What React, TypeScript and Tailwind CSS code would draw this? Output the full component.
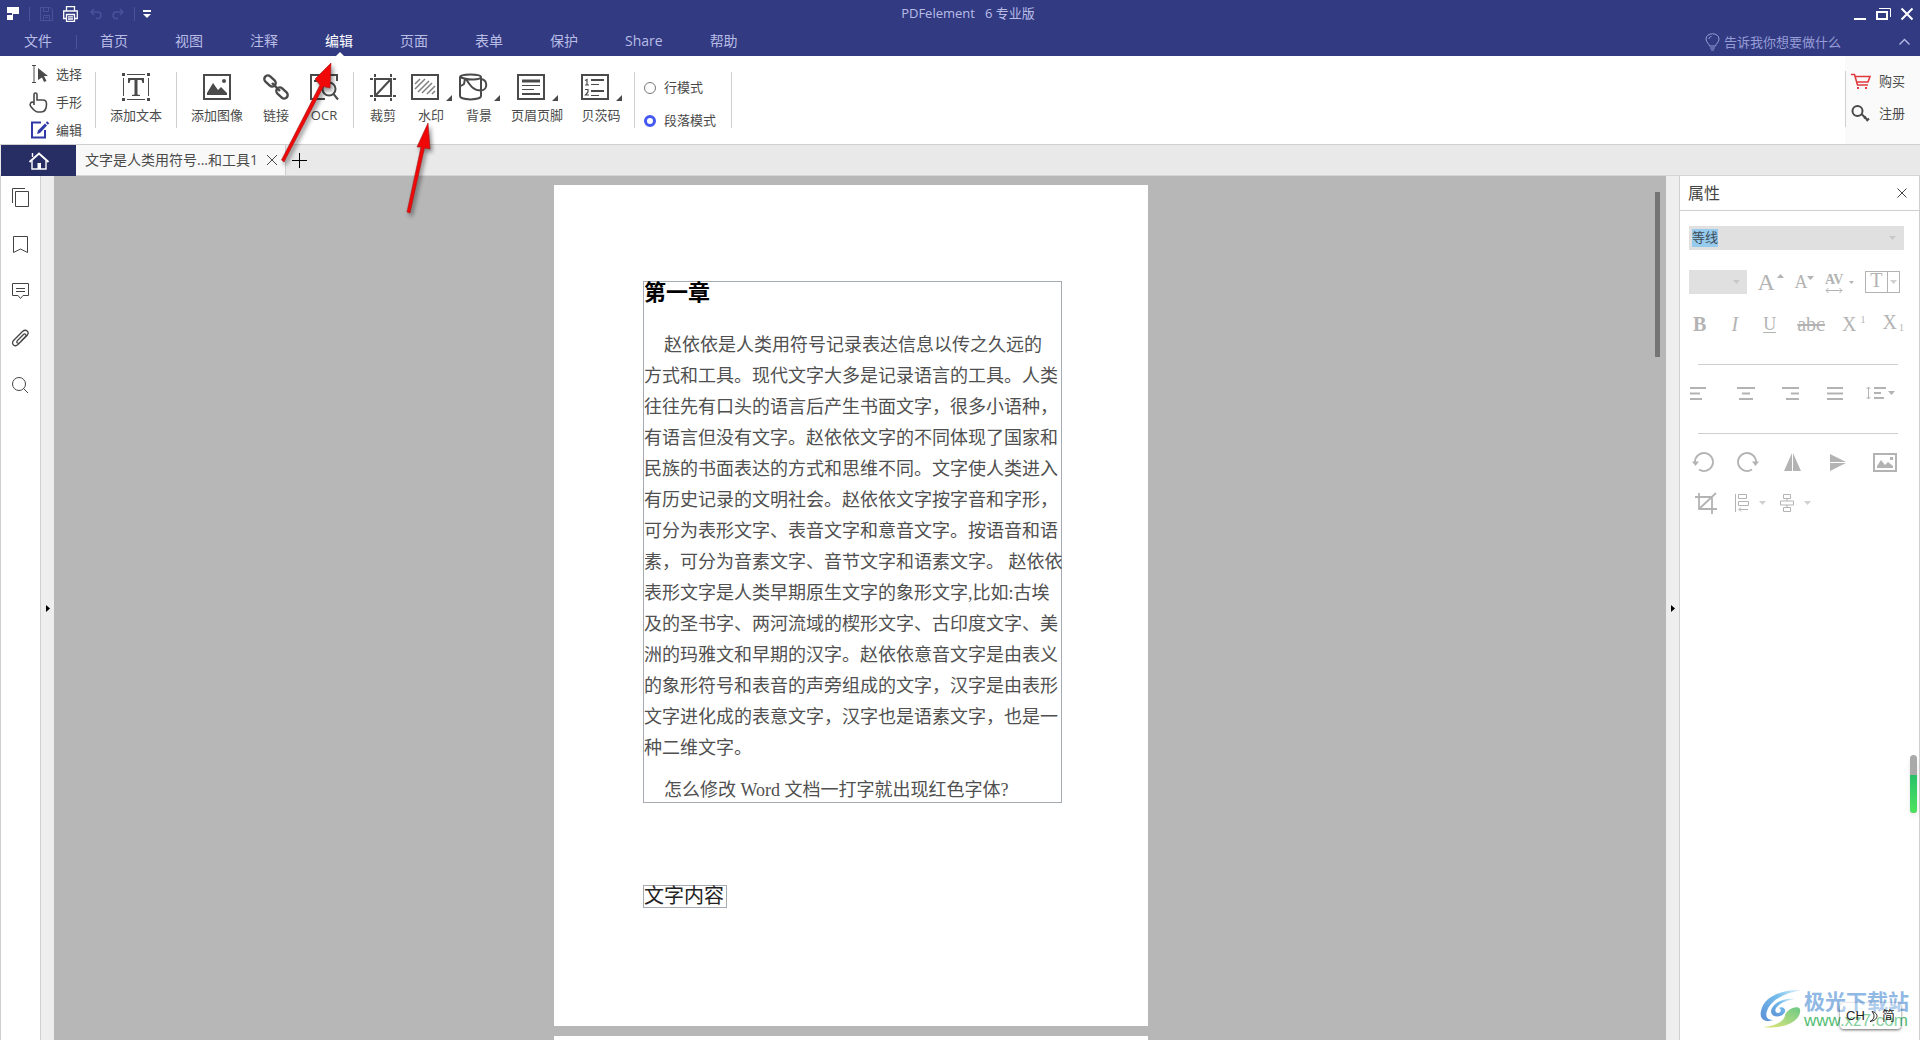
/**
 * PDF editor window
 *
 * - Title bar with quick actions and the main menu
 * - Ribbon for the edit tab
 * - Document tabs
 * - Left tool bar, page canvas and the properties panel
 */
import type { ReactNode } from "react";
import { useState } from "react";

const MENU = ["首页", "视图", "注释", "编辑", "页面", "表单", "保护", "Share", "帮助"];

const LINES = [
  "方式和工具。现代文字大多是记录语言的工具。人类",
  "往往先有口头的语言后产生书面文字，很多小语种，",
  "有语言但没有文字。赵依依文字的不同体现了国家和",
  "民族的书面表达的方式和思维不同。文字使人类进入",
  "有历史记录的文明社会。赵依依文字按字音和字形，",
  "可分为表形文字、表音文字和意音文字。按语音和语",
  "素，可分为音素文字、音节文字和语素文字。 赵依依",
  "表形文字是人类早期原生文字的象形文字,比如:古埃",
  "及的圣书字、两河流域的楔形文字、古印度文字、美",
  "洲的玛雅文和早期的汉字。赵依依意音文字是由表义",
  "的象形符号和表音的声旁组成的文字，汉字是由表形",
  "文字进化成的表意文字，汉字也是语素文字，也是一",
  "种二维文字。",
];

/* Small stroke icon, drawn 1:1 in pixels */
function Icon({ w, h, sw = 1, children }: { w: number; h: number; sw?: number; children: ReactNode }) {
  return (
    <svg
      width={w}
      height={h}
      viewBox={`0 0 ${w} ${h}`}
      fill="none"
      stroke="currentColor"
      strokeWidth={sw}
      className="shrink-0 overflow-visible"
      aria-hidden="true"
    >
      {children}
    </svg>
  );
}

function Caret() {
  return (
    <Icon w={7} h={4}>
      <path d="M0 0H7L3.5 4Z" fill="currentColor" stroke="none" />
    </Icon>
  );
}

function Divider() {
  return <div className="h-14 w-px shrink-0 bg-[#cfcfcf]" />;
}

/* ---------- Title bar and menu ---------- */

function TitleBar() {
  return (
    <div className="grid h-[27px] grid-cols-[1fr_auto_1fr] items-center text-white">
      <div className="flex items-center pl-[7px]">
        <Icon w={12} h={14}>
          <path d="M0 0H12V7H6V13H0V8H5V6H0Z" fill="currentColor" stroke="none" />
        </Icon>
        <span className="ml-2.5 h-3.5 w-px bg-[#4a529a]" />
        <button aria-label="保存" className="ml-2.5 text-[#4a529a]">
          <Icon w={13} h={14}>
            <path d="M.5 .5H10L12.5 3V13.5H.5ZM3.5 .5V4.5H8.5V.5M3.5 13V8.5H9.5V13M5 10.5H8" />
          </Icon>
        </button>
        <button aria-label="打印" className="ml-2.5">
          <Icon w={15} h={16} sw={1.3}>
            <path d="M3.5 5V.7H11.5V5M3.5 12.5H.7V5H14.3V12.5H11.5M3.5 8.5H11.5V15.3H3.5ZM5 10.8H10M5 13H10" />
          </Icon>
        </button>
        <button aria-label="撤销" className="ml-3 text-[#4a529a]">
          <Icon w={12} h={12} sw={1.4}>
            <path d="M4 1L1 4L4 7M1 4H8C12 4 12 10.5 8 10.5H6" />
          </Icon>
        </button>
        <button aria-label="重做" className="ml-2.5 text-[#4a529a]">
          <Icon w={12} h={12} sw={1.4}>
            <path d="M8 1L11 4L8 7M11 4H4C0 4 0 10.5 4 10.5H6" />
          </Icon>
        </button>
        <span className="ml-2.5 h-3.5 w-px bg-[#4a529a]" />
        <button aria-label="自定义" className="ml-2">
          <Icon w={8} h={8}>
            <path d="M0 0H8V2H0ZM0 4H8L4 8Z" fill="currentColor" stroke="none" />
          </Icon>
        </button>
      </div>
      <h1 className="whitespace-pre pl-4 text-[13px] text-[#b9bde6]">PDFelement   6 专业版</h1>
      <div className="flex items-center justify-end gap-2.5 pr-[7px]">
        <button aria-label="最小化">
          <Icon w={12} h={12} sw={2}>
            <path d="M0 11H12" />
          </Icon>
        </button>
        <button aria-label="还原">
          <Icon w={15} h={12}>
            <path d="M1 4H11V11H1Z" strokeWidth="2" />
            <path d="M3 .5H14.5V9" />
          </Icon>
        </button>
        <button aria-label="关闭">
          <Icon w={12} h={12} sw={2}>
            <path d="M.5 .5L11.5 11.5M11.5 .5L.5 11.5" />
          </Icon>
        </button>
      </div>
    </div>
  );
}

function MenuBar() {
  const [active, setActive] = useState("编辑");

  return (
    <div className="flex h-[29px] items-center text-sm leading-7 text-[#b9bde6]">
      <button className="px-6 pb-0.5">文件</button>
      <span className="h-3.5 w-px bg-[#4a529a]" />
      <nav className="flex gap-[47px] pl-[23px]">
        {MENU.map((item) => (
          <button
            key={item}
            onClick={() => setActive(item)}
            className={`relative h-[29px] pb-0.5 ${item === active ? "text-white" : ""}`}
          >
            {item}
            {item === active && (
              <span className="absolute bottom-0 left-1/2 -ml-[3px] border-x-4 border-b-4 border-x-transparent border-b-white" />
            )}
          </button>
        ))}
      </nav>
      <button className="ml-auto flex items-center gap-1 text-[13px] text-[#969cd6]">
        <Icon w={15} h={18}>
          <path d="M4.5 13C4.5 11 1 9.5 1 6C1 -1 14 -1 14 6C14 9.5 10.5 11 10.5 13ZM5 15H10M6 17H9M4 6C4 4.5 5 3.5 6.5 3.5" />
        </Icon>
        告诉我你想要做什么
      </button>
      <button aria-label="收起" className="ml-[58px] mr-2.5">
        <Icon w={11} h={6} sw={1.3}>
          <path d="M.5 5.5L5.5 .5L10.5 5.5" />
        </Icon>
      </button>
    </div>
  );
}

/* ---------- Ribbon ---------- */

function Tool({ label, width, menu, children }: { label: string; width: string; menu?: boolean; children: ReactNode }) {
  return (
    <button className={`flex shrink-0 flex-col items-center gap-1 whitespace-nowrap pt-px ${width}`}>
      <span className="flex items-end gap-[7px]">
        {children}
        {menu && (
          <Icon w={6} h={6}>
            <path d="M6 0V6H0Z" fill="currentColor" stroke="none" />
          </Icon>
        )}
      </span>
      <span className="text-[13px] leading-5">{label}</span>
    </button>
  );
}

function Ribbon() {
  const [mode, setMode] = useState("段落模式");

  return (
    <div className="flex h-[89px] border-b border-[#cfcfcf] bg-white text-[13px] text-[#4a4a4a]">
      <div className="flex w-[95px] shrink-0 flex-col gap-2 pl-[29px] pt-2 leading-5">
        <button className="flex items-center gap-2">
          <Icon w={19} h={18}>
            <path d="M3 .5H7M5 .5V17.5M3 17.5H7" />
            <path d="M9 3L19 11H15L17.5 16L15 17L13 12.5L9 15Z" fill="currentColor" stroke="none" />
          </Icon>
          选择
        </button>
        <button className="flex h-5 items-center gap-2">
          <Icon w={19} h={21} sw={1.6}>
            <path d="M5 13V2.5C5 .5 8 .5 8 2.5V8H14C17 8 17.5 10 17.5 12C17.5 17 16 20 12 20H9C6 20 4 17 1.5 14C.5 12.5 1.5 9 5 10.5" />
          </Icon>
          手形
        </button>
        <button className="flex items-center gap-2">
          <span className="text-[#2f3aa8]">
            <Icon w={19} h={18} sw={2}>
              <path d="M12 1.5H3V16.5H16V9" />
              <path d="M8 13L9 9.5L16 2.5L18 4.5L11 12Z" fill="currentColor" stroke="none" />
              <path d="M17.5 1L19.5 3" />
            </Icon>
          </span>
          编辑
        </button>
      </div>

      <div className="flex min-w-0 flex-1 items-start pt-4">
        <Divider />
        <Tool label="添加文本" width="w-20">
          <Icon w={28} h={28}>
            <path d="M5 1.5H23M5 26.5H23M1.5 5V23M26.5 5V23" />
            <path d="M0 0H3V3H0ZM25 0H28V3H25ZM0 25H3V28H0ZM25 25H28V28H25ZM6 5H22V10H20.5L19.5 7H15.5V21.5L18 22V23H10V22L12.5 21.5V7H8.5L7.5 10H6Z" fill="currentColor" stroke="none" />
          </Icon>
        </Tool>
        <Divider />
        <div className="flex px-1">
          <Tool label="添加图像" width="w-18">
            <Icon w={28} h={28} sw={2}>
              <path d="M1 2H27V26H1Z" />
              <path d="M4 22V20L10 10L15 17L18 14L24 20V22ZM19 8A2 2 0 1 0 23 8A2 2 0 1 0 19 8" fill="currentColor" stroke="none" />
            </Icon>
          </Tool>
          <Tool label="链接" width="w-[46px]">
            <Icon w={28} h={28} sw={2.4}>
              <rect x="-6.5" y="-3.5" width="13" height="7" rx="3.5" transform="translate(8 8) rotate(43)" />
              <rect x="-6.5" y="-3.5" width="13" height="7" rx="3.5" transform="translate(20 20) rotate(43)" />
              <path d="M10 10L18 18" />
            </Icon>
          </Tool>
          <Tool label="OCR" width="w-[50px]">
            <Icon w={28} h={28} sw={2}>
              <path d="M15 26H1V2H27V8M4 8H9M5 26L13 12" />
              <circle cx="19" cy="16" r="6.5" />
              <path d="M23.5 21L28 26.5" />
            </Icon>
          </Tool>
        </div>
        <Divider />
        <div className="flex pl-[5px]">
          <Tool label="裁剪" width="w-12">
            <Icon w={26} h={28} sw={2}>
              <path d="M5 6H21V23H5ZM6 22L20 7M5 1V4M21 1V4M5 25V28M21 25V28M0 6H3M0 23H3M23 6H26M23 23H26" />
            </Icon>
          </Tool>
          <Tool label="水印" width="w-12" menu>
            <Icon w={28} h={28} sw={2}>
              <path d="M1 2H27V26H1Z" />
              <path d="M4 11L9 6M4 16L14 6M7 19L18 8M11 20L21 10M16 21L24 13M21 21L24 18" strokeWidth="1.5" strokeOpacity=".7" />
            </Icon>
          </Tool>
          <Tool label="背景" width="w-12" menu>
            <Icon w={28} h={28} sw={2}>
              <path d="M1 4V23C1 27.5 22 27.5 22 23V4M1 4C1 .5 22 .5 22 4C22 7 8 7.5 1 4M22 6C29 7 29 17 22 17.5C15 17.5 12 14 7 6M6 6L5 11L2 13" />
            </Icon>
          </Tool>
          <Tool label="页眉页脚" width="w-17" menu>
            <Icon w={28} h={28} sw={2}>
              <path d="M1 2H27V26H1Z" />
              <path d="M5 8H23" strokeWidth="3" />
              <path d="M5 12.5H23M5 16.5H17" strokeWidth="1" />
              <path d="M5 21H23" />
            </Icon>
          </Tool>
          <Tool label="贝茨码" width="w-[60px]" menu>
            <Icon w={28} h={28} sw={2}>
              <path d="M1 2H27V26H1Z" />
              <path d="M10 7H23M10 18H23" />
              <path d="M10 11.5H18M10 22.5H18M4 7.5L6 6.5V12M4 12H8M4 16.5H7V19L4.5 22H8" strokeWidth="1.2" />
            </Icon>
          </Tool>
        </div>
        <span className="w-[3px]" />
        <Divider />
        <div className="flex w-24 shrink-0 flex-col gap-3 whitespace-nowrap pl-[9px] pt-[5px] leading-[21px]">
          {["行模式", "段落模式"].map((item) => (
            <label key={item} className="flex items-center gap-2">
              <input
                type="radio"
                name="mode"
                checked={mode === item}
                onChange={() => setMode(item)}
                className="size-3 appearance-none rounded-full border border-[#777] bg-white checked:border-[3px] checked:border-[#4558f0]"
              />
              {item}
            </label>
          ))}
        </div>
        <Divider />
      </div>

      <div className="flex w-[75px] shrink-0 bg-[#fafafa] pt-[15px]">
        <Divider />
        <div className="flex flex-col gap-3 pl-[5px] leading-5">
          <button className="flex items-center gap-2">
            <span className="text-[#e03a3e]">
              <Icon w={20} h={17} sw={1.6}>
                <path d="M0 1.5H3.5L6.5 12H17M4 3.5H19L17 9H6" />
                <path d="M6 14H8V16H6ZM14 14H16V16H14Z" fill="currentColor" stroke="none" />
              </Icon>
            </span>
            购买
          </button>
          <button className="flex items-center gap-2">
            <Icon w={20} h={17} sw={2}>
              <circle cx="6.5" cy="6" r="5" />
              <path d="M10.5 9L17 15.5M13 13.5L15 11.5M15.5 16L18 13.5" />
            </Icon>
            注册
          </button>
        </div>
      </div>
    </div>
  );
}

/* ---------- Document tabs ---------- */

function DocumentTabs() {
  return (
    <div className="flex h-[31px] items-stretch border-b border-[#d4d4d4] bg-[#e9e9e9] pl-px">
      <button aria-label="主页" className="-mb-px flex w-[75px] items-center justify-center bg-[#262e64] text-white">
        <Icon w={20} h={18} sw={2}>
          <path d="M.5 10L10 1.5L19.5 10" />
          <path d="M3 8.5V17H17V8.5M3.5 1V5" strokeWidth="1.4" />
          <path d="M8.5 11H12V17H8.5Z" fill="currentColor" stroke="none" />
        </Icon>
      </button>
      <div className="flex w-[210px] items-center justify-between border-r border-[#cfcfcf] bg-[#f8f8f8] pl-[9px] pr-2 text-sm text-[#4a4a4a]">
        <span className="whitespace-nowrap">文字是人类用符号...和工具1</span>
        <button aria-label="关闭标签">
          <Icon w={10} h={10}>
            <path d="M0 0L10 10M10 0L0 10" />
          </Icon>
        </button>
      </div>
      <button aria-label="新建标签" className="px-1.5 text-black">
        <Icon w={15} h={15}>
          <path d="M7.5 0V15M0 7.5H15" />
        </Icon>
      </button>
    </div>
  );
}

/* ---------- Left bar ---------- */

function SideBar() {
  return (
    <aside className="flex w-10 shrink-0 flex-col items-center gap-7 border-r border-[#cfcfcf] bg-white pt-3 text-[#444]">
      <button aria-label="缩略图">
        <Icon w={17} h={19}>
          <path d="M.5 15V.5H13M3.5 3.5H16.5V18.5H3.5Z" />
        </Icon>
      </button>
      <button aria-label="书签">
        <Icon w={17} h={19}>
          <path d="M1.5 1.5H15.5V17.5L8.5 14L1.5 17.5Z" />
        </Icon>
      </button>
      <button aria-label="注释">
        <Icon w={17} h={19}>
          <path d="M.5 1.5H16.5V13.5H11L8.5 16.5L6 13.5H.5ZM4 6.5H13M4 9.5H13" />
        </Icon>
      </button>
      <button aria-label="附件">
        <Icon w={17} h={19} sw={1.3}>
          <path d="M5 12L11.5 5.5C13 4 15 6 13.5 7.5L6 15.5C3 18.5 -1.5 15 1.5 11.5L10.5 2.5C14 -.5 18 3 15 6.5L8 13.5C6 15.5 4 13.5 5 12" />
        </Icon>
      </button>
      <button aria-label="搜索">
        <Icon w={17} h={19}>
          <circle cx="7" cy="8" r="6.5" />
          <path d="M11.5 12.5L16 17" />
        </Icon>
      </button>
    </aside>
  );
}

/* ---------- Page canvas ---------- */

function Canvas() {
  return (
    <main className="relative flex min-w-0 flex-1 flex-col items-center gap-2.5 overflow-hidden bg-[#b7b7b7] pr-[18px] pt-[9px]">
      <article className="h-[841px] w-[594px] shrink-0 bg-white px-[89px] pt-24 font-['Liberation_Serif','Noto_Sans_CJK_SC',serif] text-[#505050]">
        <section className="h-[522px] w-[419px] whitespace-pre border border-[#a5aab3] text-lg leading-[31px]">
          <h2 className="pb-[26px] text-[22px] font-bold leading-[22px] text-black">第一章</h2>
          <p className="pl-5">赵依依是人类用符号记录表达信息以传之久远的</p>
          {LINES.map((line) => (
            <p key={line}>{line}</p>
          ))}
          <p className="pl-5 pt-[11px]">怎么修改 Word 文档一打字就出现红色字体?</p>
        </section>
        <section className="mt-[82px] h-[23px] w-[84px] whitespace-nowrap border border-[#a5aab3] text-xl leading-5 text-[#222]">
          文字内容
        </section>
      </article>
      <article className="h-[841px] w-[594px] shrink-0 bg-white" />
      <div className="absolute right-1.5 top-4 h-[165px] w-[5px] bg-[#757575]" />
    </main>
  );
}

function Gutter({ open }: { open: "left" | "right" }) {
  return (
    <div className="flex w-[13px] shrink-0 items-center justify-center bg-[#eeeeee] text-black">
      <button aria-label={open === "left" ? "展开左侧" : "展开右侧"}>
        <Icon w={4} h={7}>
          <path d="M0 0V7L4 3.5Z" fill="currentColor" stroke="none" />
        </Icon>
      </button>
    </div>
  );
}

/* ---------- Properties panel ---------- */

function Properties() {
  return (
    <aside className="w-[241px] shrink-0 border-x border-[#cfcfcf] bg-white text-[#b3b3b3]">
      <header className="flex h-[35px] items-center justify-between border-b border-[#cfcfcf] pl-2 pr-3 text-[#444]">
        <h2 className="text-base">属性</h2>
        <button aria-label="关闭属性">
          <Icon w={10} h={10}>
            <path d="M.5 .5L9.5 9.5M9.5 .5L.5 9.5" />
          </Icon>
        </button>
      </header>

      <div className="pl-[9px] pr-[15px] pt-[15px]">
        <div className="flex h-6 items-center bg-[#e0e0e0] pl-[3px] pr-2 text-[#c8c8c8]">
          <input
            aria-label="字体"
            defaultValue="等线"
            className="h-[18px] w-[26px] bg-[#97cbee] text-[13px] text-[#3c4a55] outline-none"
          />
          <button aria-label="选择字体" className="ml-auto">
            <Caret />
          </button>
        </div>

        <div className="mt-5 flex h-6 items-center justify-between pr-1 font-['Liberation_Serif',serif]">
          <button aria-label="字号" className="flex h-6 w-[58px] items-center justify-end bg-[#e0e0e0] pr-[7px] text-[#c8c8c8]">
            <Caret />
          </button>
          <button aria-label="增大字号" className="flex items-start text-2xl leading-6">
            A
            <span className="pl-0.5">
              <Icon w={7} h={12}>
                <path d="M0 8H7L3.5 4Z" fill="currentColor" stroke="none" />
              </Icon>
            </span>
          </button>
          <button aria-label="减小字号" className="flex items-start text-lg leading-7">
            A
            <span className="pt-2">
              <Caret />
            </span>
          </button>
          <button aria-label="字间距" className="flex items-center gap-1.5">
            <span className="flex flex-col items-center text-sm font-bold leading-4">
              AV
              <Icon w={18} h={5}>
                <path d="M1 2.5H17M3.5 0L1 2.5L3.5 5M14.5 0L17 2.5L14.5 5" />
              </Icon>
            </span>
            <Icon w={5} h={3}>
              <path d="M0 0H5L2.5 3Z" fill="currentColor" stroke="none" />
            </Icon>
          </button>
          <button aria-label="文字颜色" className="flex h-[22px] w-[35px] items-center border border-current text-xl leading-5">
            <span className="h-5 w-[22px] border-r border-current leading-4">T</span>
            <span className="pl-0.5 text-[#d0d0d0]">
              <Caret />
            </span>
          </button>
        </div>

        <div className="mt-4 flex h-7 items-center justify-between pl-1 font-['Liberation_Serif',serif] text-xl leading-7">
          <button className="font-bold">B</button>
          <button className="pl-2 italic">I</button>
          <button className="pl-2 text-lg underline underline-offset-2">U</button>
          <button className="pl-1 line-through">abc</button>
          <button className="flex">
            X<span className="pl-1 text-[10px] leading-5">1</span>
          </button>
          <button className="flex">
            X<span className="pl-0.5 pt-2 text-[10px] leading-6">1</span>
          </button>
        </div>
      </div>

      <hr className="ml-[18px] mr-[21px] mt-[26px] border-[#cfcfcf]" />

      <div className="mr-[18px] mt-4 grid h-6 grid-cols-5 items-center justify-items-center">
        <button aria-label="左对齐" className="pr-2">
          <Icon w={16} h={13} sw={2}>
            <path d="M0 1H16M0 6.5H10M0 12H12" />
          </Icon>
        </button>
        <button aria-label="居中">
          <Icon w={18} h={13} sw={2}>
            <path d="M0 1H18M5 6.5H13M2 12H16" />
          </Icon>
        </button>
        <button aria-label="右对齐">
          <Icon w={17} h={13} sw={2}>
            <path d="M0 1H17M9 6.5H17M4 12H17" />
          </Icon>
        </button>
        <button aria-label="两端对齐">
          <Icon w={16} h={13} sw={2}>
            <path d="M0 1H16M0 6.5H16M0 12H16" />
          </Icon>
        </button>
        <button aria-label="行距" className="flex items-center gap-0.5 pl-1">
          <Icon w={20} h={14}>
            <path d="M2.5 1V13M.5 3L2.5 1L4.5 3M.5 11L2.5 13L4.5 11" />
            <path d="M8 2H20M8 7H15M8 12H18" strokeWidth="2" />
          </Icon>
          <Caret />
        </button>
      </div>

      <hr className="ml-[18px] mr-[21px] mt-[28px] border-[#cfcfcf]" />

      <div className="mr-3.5 mt-4 grid h-6 grid-cols-5 items-center justify-items-center">
        <button aria-label="向左旋转">
          <Icon w={22} h={20} sw={1.8}>
            <path d="M7 17.5A9 9 0 1 0 3 10" />
            <path d="M0 9.5H7L3.5 14Z" fill="currentColor" stroke="none" />
          </Icon>
        </button>
        <button aria-label="向右旋转">
          <Icon w={22} h={20} sw={1.8}>
            <path d="M15 17.5A9 9 0 1 1 19 10" />
            <path d="M15 9.5H22L18.5 14Z" fill="currentColor" stroke="none" />
          </Icon>
        </button>
        <button aria-label="水平翻转">
          <Icon w={17} h={18}>
            <path d="M8 0V18H0ZM9 0V18H17Z" fill="currentColor" stroke="none" />
          </Icon>
        </button>
        <button aria-label="垂直翻转">
          <Icon w={16} h={17}>
            <path d="M0 0V8H16ZM0 9V17L16 9Z" fill="currentColor" stroke="none" />
          </Icon>
        </button>
        <button aria-label="替换图像" className="pl-1">
          <Icon w={24} h={19} sw={2}>
            <path d="M1 1H23V18H1Z" />
            <path d="M4 15V13L8 7L12 12L15 9L20 13V15ZM17 4H20V7H17Z" fill="currentColor" stroke="none" />
          </Icon>
        </button>
      </div>

      <div className="mr-3.5 mt-[17px] grid h-6 grid-cols-5 items-center justify-items-center">
        <button aria-label="裁剪图像" className="pl-1.5">
          <Icon w={22} h={21} sw={1.8}>
            <path d="M4 0V16H22M0 4H17V21M4 16L21 0" />
          </Icon>
        </button>
        <button aria-label="对齐方式" className="flex items-center gap-2.5 pl-1.5">
          <Icon w={14} h={18}>
            <path d="M.5 0V18M3.5 .5H11.5V4.5H3.5ZM3.5 7.5H13.5V11.5H3.5ZM4 15.5H13M6 13.5L4 15.5L6 17.5" />
          </Icon>
          <span className="text-[#d0d0d0]">
            <Caret />
          </span>
        </button>
        <button aria-label="分布方式" className="flex items-center gap-2.5 pl-1.5">
          <Icon w={14} h={18}>
            <path d="M3.5 .5H10.5V4.5H3.5ZM.5 7H13.5V11H.5ZM3.5 13.5H10.5V17.5H3.5ZM7 4.5V7M7 11V13.5" />
          </Icon>
          <span className="text-[#d0d0d0]">
            <Caret />
          </span>
        </button>
      </div>
    </aside>
  );
}

/* ---------- Things that float over the window ---------- */

function Pointers() {
  return (
    <svg
      width="180"
      height="170"
      viewBox="0 0 180 170"
      className="pointer-events-none absolute left-[270px] top-[55px] drop-shadow-[2px_3px_2px_rgba(0,0,0,0.45)]"
      aria-hidden="true"
    >
      <path d="M11.500 105L50 30L45 24L61 8L60 33L53.500 31.500L14 107Z" fill="#f00808" stroke="#a51515" strokeWidth=".6" />
      <path d="M137 157L151 92L147 92L158 68L160 94L154.500 93L140 158Z" fill="#f00808" stroke="#a51515" strokeWidth=".6" />
    </svg>
  );
}

function SiteMark() {
  return (
    <div className="absolute bottom-[11px] right-[11px] flex items-center gap-0.5">
      <svg width="42" height="40" viewBox="0 0 42 40" aria-hidden="true">
        <defs>
          <linearGradient id="swirlBlue" x1="0" y1="1" x2="1" y2="0">
            <stop offset="0" stopColor="#5b90d6" />
            <stop offset=".6" stopColor="#74bdec" />
            <stop offset="1" stopColor="#e2f3fd" />
          </linearGradient>
          <linearGradient id="swirlGreen" x1="0" y1="1" x2="1" y2="0">
            <stop offset="0" stopColor="#e3e77a" />
            <stop offset="1" stopColor="#6bc986" />
          </linearGradient>
        </defs>
        <path d="M42 1C25 0 4 6 1 22C-1 31 6 34 13 31C7 31 5 27 7 22C11 11 24 4 42 1Z" fill="url(#swirlBlue)" />
        <path d="M35 10C22 8 11 16 11 23C12 29 22 29 25 23C26 19 22 17 19 19C22 20 21 24 18 24C15 24 14 20 18 17C22 13 28 11 35 10Z" fill="url(#swirlBlue)" />
        <path d="M3 38C14 38 25 32 25 26C28 19 38 16 40 20C42 30 27 41 3 38Z" fill="url(#swirlGreen)" />
      </svg>
      <div className="flex flex-col whitespace-nowrap">
        <span className="text-[21px] font-bold leading-6 text-[#8fb8e4]">极光下载站</span>
        <span className="font-['Liberation_Sans',sans-serif] text-[17px] leading-4 text-[#52bd74]">www.xz7.com</span>
      </div>
      <div className="absolute bottom-0 right-2 flex h-[26px] w-[61px] items-center justify-center gap-1 rounded bg-white/30 font-['Liberation_Sans','Noto_Sans_CJK_SC',sans-serif] text-[13px] text-[#222] shadow-[0_1px_3px_0_rgba(0,0,0,0.6)]">
        CH
        <Icon w={9} h={11}>
          <path d="M3 .5C10 2 10 9 1 10.5C6 8 6 4 3 .5Z" />
        </Icon>
        简
      </div>
    </div>
  );
}

function App() {
  return (
    <div className="relative flex h-screen flex-col overflow-hidden bg-white font-['Open_Sans','Noto_Sans_CJK_SC',sans-serif]">
      <header className="bg-[#323a82]">
        <TitleBar />
        <MenuBar />
      </header>
      <Ribbon />
      <DocumentTabs />
      <div className="flex min-h-0 flex-1 border-l border-[#cfcfcf]">
        <SideBar />
        <Gutter open="left" />
        <Canvas />
        <Gutter open="right" />
        <Properties />
      </div>

      <Pointers />
      <div className="absolute right-[3px] top-[755px] h-[58px] w-[7px] overflow-hidden rounded-full bg-[#a9a9a9] pt-5 shadow-md">
        <div className="h-full bg-linear-to-b from-[#27c267] to-[#4de35f]" />
      </div>
      <SiteMark />
    </div>
  );
}

export default App;
